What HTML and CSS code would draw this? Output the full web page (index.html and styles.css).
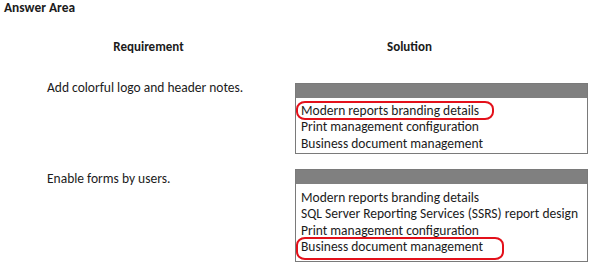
FILE: index.html
```html
<!DOCTYPE html>
<html>
<head>
<meta charset="utf-8">
<link rel="stylesheet" href="styles.css">
</head>
<body>
<div class="page">
  <div class="title">Answer Area</div>
  <div class="head">
    <div class="head-req">Requirement</div>
    <div class="head-sol">Solution</div>
  </div>
  <div class="row row-one">
    <div class="req">Add colorful logo and header notes.</div>
    <div class="box box-one">
      <div class="box-head"></div>
      <ul class="opts">
        <li class="pick pick-one">Modern reports branding details</li>
        <li>Print management configuration</li>
        <li>Business document management</li>
      </ul>
    </div>
  </div>
  <div class="row row-two">
    <div class="req">Enable forms by users.</div>
    <div class="box box-two">
      <div class="box-head"></div>
      <ul class="opts">
        <li>Modern reports branding details</li>
        <li>SQL Server Reporting Services (SSRS) report design</li>
        <li>Print management configuration</li>
        <li class="pick pick-two">Business document management</li>
      </ul>
    </div>
  </div>
</div>
</body>
</html>
```
FILE: styles.css
```css
html, body {
  margin: 0;
  padding: 0;
  background: #ffffff;
}
body {
  font-family: Carlito, Lato, "Open Sans", sans-serif;
  color: #1b1b1b;
  width: 595px;
  height: 263px;
  overflow: hidden;
}
.page {
  display: flex;
  flex-direction: column;
}
.title {
  font-weight: bold;
  font-size: 13.4px;
  line-height: 16px;
  padding: 0 0 0 4px;
}
.head {
  display: flex;
  font-weight: bold;
  font-size: 13px;
  line-height: 16px;
  margin-top: 23px;
}
.head-req {
  width: 297px;
  text-align: center;
}
.head-sol {
  width: 225px;
  text-align: center;
}
.row {
  display: grid;
  grid-template-columns: 295px 293px;
  font-size: 13.5px;
  white-space: nowrap;
}
.row-one {
  margin-top: 28px;
}
.row-two {
  margin-top: 15px;
}
.req {
  padding-left: 47px;
  line-height: 16px;
}
.row-one .req {
  margin-top: -3px;
}
.row-two .req {
  margin-top: 2px;
}
.box {
  border: 1px solid #7a7a7a;
  box-sizing: border-box;
  position: relative;
}
.box-one {
  height: 71px;
}
.box-two {
  height: 93px;
}
.box-head {
  height: 14px;
  background: #808080;
}
.opts {
  list-style: none;
  margin: 0;
  padding: 4.5px 0 0 5px;
}
.opts li {
  line-height: 16.5px;
}
.box-two .opts {
  padding-top: 5.5px;
}
.pick {
  position: relative;
}
.pick::after {
  content: "";
  position: absolute;
  border: 2px solid #e3101a;
  box-sizing: border-box;
  border-radius: 9px / 8px;
}
.pick-one::after {
  left: -5px;
  top: -2px;
  width: 198px;
  height: 19px;
}
.pick-two::after {
  left: -5px;
  top: -2px;
  width: 208px;
  height: 23px;
}
```
